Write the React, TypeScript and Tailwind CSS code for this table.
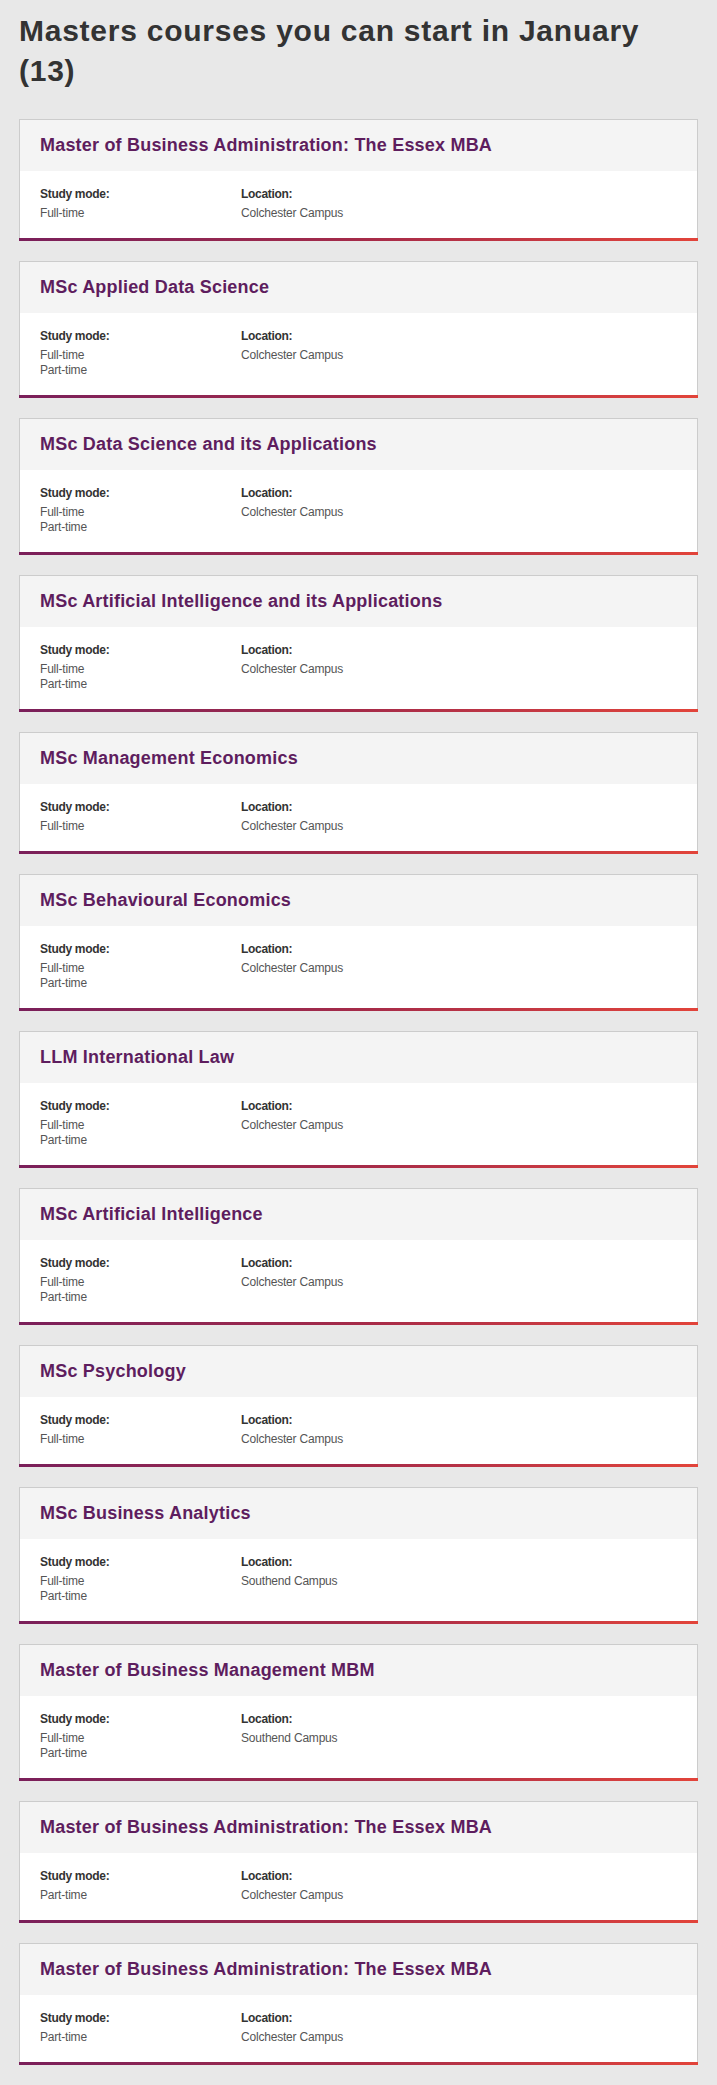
import React from "react";

type Course = {
  title: string;
  modes: string[];
  location: string;
};

const courses: Course[] = [
  { title: "Master of Business Administration: The Essex MBA", modes: ["Full-time"], location: "Colchester Campus" },
  { title: "MSc Applied Data Science", modes: ["Full-time", "Part-time"], location: "Colchester Campus" },
  { title: "MSc Data Science and its Applications", modes: ["Full-time", "Part-time"], location: "Colchester Campus" },
  { title: "MSc Artificial Intelligence and its Applications", modes: ["Full-time", "Part-time"], location: "Colchester Campus" },
  { title: "MSc Management Economics", modes: ["Full-time"], location: "Colchester Campus" },
  { title: "MSc Behavioural Economics", modes: ["Full-time", "Part-time"], location: "Colchester Campus" },
  { title: "LLM International Law", modes: ["Full-time", "Part-time"], location: "Colchester Campus" },
  { title: "MSc Artificial Intelligence", modes: ["Full-time", "Part-time"], location: "Colchester Campus" },
  { title: "MSc Psychology", modes: ["Full-time"], location: "Colchester Campus" },
  { title: "MSc Business Analytics", modes: ["Full-time", "Part-time"], location: "Southend Campus" },
  { title: "Master of Business Management MBM", modes: ["Full-time", "Part-time"], location: "Southend Campus" },
  { title: "Master of Business Administration: The Essex MBA", modes: ["Part-time"], location: "Colchester Campus" },
  { title: "Master of Business Administration: The Essex MBA", modes: ["Part-time"], location: "Colchester Campus" },
];

const CourseCard = ({ course }: { course: Course }) => {
  return (
    <div className="bg-white border border-b-0 border-[#cccccc]">
      <div className="bg-[#f4f4f4] px-[20px] py-[13px]">
        <h3 className="text-[18px] leading-[25px] font-bold text-[#5e1d5e] tracking-[0.2px]">{course.title}</h3>
      </div>
      <div className="flex px-[20px] pt-[14px] pb-[17px] text-[12px]">
        <div className="w-[201px] shrink-0">
          <div className="leading-[18px] font-bold text-[#333333] tracking-[-0.3px]">Study mode:</div>
          <div className="mt-[3px] leading-[15px] text-[#555555] tracking-[-0.2px]">
            {course.modes.map((m) => (
              <div key={m}>{m}</div>
            ))}
          </div>
        </div>
        <div>
          <div className="leading-[18px] font-bold text-[#333333] tracking-[-0.3px]">Location:</div>
          <div className="mt-[3px] leading-[15px] text-[#555555] tracking-[-0.2px]">{course.location}</div>
        </div>
      </div>
      {/* gradient strip standing in for the bottom border */}
      <div className="h-[3px] -mx-px bg-gradient-to-r from-[#7a1f5a] via-[#a52a48] to-[#e2443a]" />
    </div>
  );
};

export default function App() {
  return (
    <div className="min-h-[2085px] bg-[#e8e8e8] px-[19px] pt-[11px] pb-[22px]" style={{ fontFamily: '"Liberation Sans", Arial, sans-serif' }}>
      <h1 className="text-[30px] leading-[40px] font-bold text-[#333333] tracking-[0.75px]">
        Masters courses you can start in January (13)
      </h1>

      <div className="mt-[28px] flex flex-col gap-[20px]">
        {courses.map((c, i) => (
          <CourseCard key={i} course={c} />
        ))}
      </div>
    </div>
  );
}
